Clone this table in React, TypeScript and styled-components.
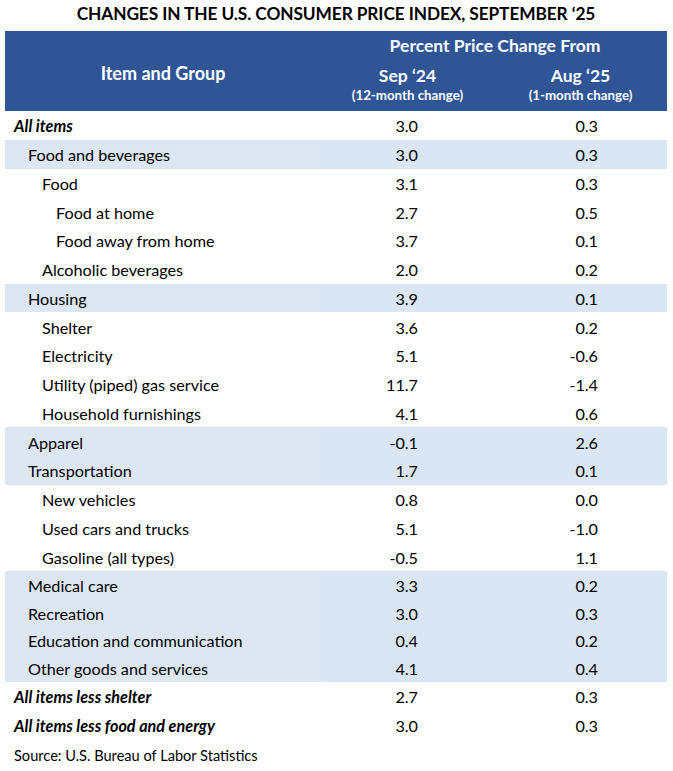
import React from "react";
import styled, { createGlobalStyle } from "styled-components";

type Item = {
  label: string;
  year: string;
  month: string;
  level: number;
  shaded?: boolean;
  total?: boolean;
  compact?: boolean;
};

const ITEMS: Item[] = [
  { label: "All items", year: "3.0", month: "0.3", level: 0, total: true },
  { label: "Food and beverages", year: "3.0", month: "0.3", level: 1, shaded: true },
  { label: "Food", year: "3.1", month: "0.3", level: 2 },
  { label: "Food at home", year: "2.7", month: "0.5", level: 3 },
  { label: "Food away from home", year: "3.7", month: "0.1", level: 3 },
  { label: "Alcoholic beverages", year: "2.0", month: "0.2", level: 2 },
  { label: "Housing", year: "3.9", month: "0.1", level: 1, shaded: true },
  { label: "Shelter", year: "3.6", month: "0.2", level: 2 },
  { label: "Electricity", year: "5.1", month: "-0.6", level: 2 },
  { label: "Utility (piped) gas service", year: "11.7", month: "-1.4", level: 2 },
  { label: "Household furnishings", year: "4.1", month: "0.6", level: 2 },
  { label: "Apparel", year: "-0.1", month: "2.6", level: 1, shaded: true },
  { label: "Transportation", year: "1.7", month: "0.1", level: 1, shaded: true },
  { label: "New vehicles", year: "0.8", month: "0.0", level: 2 },
  { label: "Used cars and trucks", year: "5.1", month: "-1.0", level: 2 },
  { label: "Gasoline (all types)", year: "-0.5", month: "1.1", level: 2 },
  { label: "Medical care", year: "3.3", month: "0.2", level: 1, shaded: true, compact: true },
  { label: "Recreation", year: "3.0", month: "0.3", level: 1, shaded: true, compact: true },
  { label: "Education and communication", year: "0.4", month: "0.2", level: 1, shaded: true, compact: true },
  { label: "Other goods and services", year: "4.1", month: "0.4", level: 1, shaded: true, compact: true },
  { label: "All items less shelter", year: "2.7", month: "0.3", level: 0, total: true },
  { label: "All items less food and energy", year: "3.0", month: "0.3", level: 0, total: true },
];

const GlobalStyle = createGlobalStyle`
  *, *::before, *::after {
    box-sizing: border-box;
  }
  body {
    margin: 0;
    background: #fff;
    font-family: Lato, "Open Sans", sans-serif;
    color: #000;
  }
`;

const Page = styled.div`
  width: 673px;
  padding: 0 6px 0 5px;
`;

const Title = styled.h1`
  margin: 0;
  height: 31px;
  display: flex;
  align-items: center;
  justify-content: center;
  font-size: 17.3px;
  font-weight: 700;
  letter-spacing: -0.1px;
  padding-bottom: 4px;
`;

const Table = styled.div`
  display: grid;
  grid-template-columns: 316px 173px 173px;
`;

const HeadCell = styled.div`
  background: #2f5597;
  color: #fff;
  font-weight: 700;
`;

const GroupHead = styled(HeadCell)`
  grid-row: span 2;
  display: flex;
  align-items: center;
  justify-content: center;
  font-size: 18px;
  padding-top: 3px;
`;

const SpanHead = styled(HeadCell)`
  grid-column: span 2;
  height: 28px;
  display: flex;
  align-items: center;
  justify-content: center;
  font-size: 17.5px;
  padding-left: 2px;
`;

const PeriodHead = styled(HeadCell)`
  height: 52px;
  display: flex;
  flex-direction: column;
  align-items: center;
  padding-top: 7px;
  font-size: 17.5px;
  line-height: 20px;

  small {
    margin-top: 2px;
    font-size: 13.3px;
    line-height: 15px;
  }
`;

const Row = styled.div<{ $shaded?: boolean; $compact?: boolean }>`
  display: contents;

  & > div {
    height: ${(p) => (p.$compact ? "27.75px" : "28.75px")};
    background: ${(p) => (p.$shaded ? "#dae6f4" : "transparent")};
  }

  & > div:first-child {
    background: ${(p) => (p.$shaded ? "#dde7f3" : "transparent")};
  }
`;

const Label = styled.div<{ $level: number; $total?: boolean }>`
  display: flex;
  align-items: center;
  padding-left: ${(p) => 9 + p.$level * 14}px;
  padding-top: 1px;
  font-size: 16.2px;
  font-weight: ${(p) => (p.$total ? 700 : 400)};
  font-style: ${(p) => (p.$total ? "italic" : "normal")};
  white-space: nowrap;
`;

const Value = styled.div<{ $pad: number }>`
  display: flex;
  align-items: center;
  justify-content: flex-end;
  padding-right: ${(p) => p.$pad}px;
  padding-top: 1px;
  font-size: 16.2px;
`;

const Source = styled.div`
  height: 30px;
  display: flex;
  align-items: center;
  padding-left: 9px;
  padding-top: 2px;
  font-size: 14.6px;
`;

const App = () => {
  return (
    <Page>
      <GlobalStyle />
      <Title>CHANGES IN THE U.S. CONSUMER PRICE INDEX, SEPTEMBER ‘25</Title>
      <Table>
        <GroupHead>Item and Group</GroupHead>
        <SpanHead>Percent Price Change From</SpanHead>
        <PeriodHead>
          Sep ‘24
          <small>(12-month change)</small>
        </PeriodHead>
        <PeriodHead>
          Aug ‘25
          <small>(1-month change)</small>
        </PeriodHead>
        {ITEMS.map((item) => (
          <Row key={item.label} $shaded={item.shaded} $compact={item.compact}>
            <Label $level={item.level} $total={item.total}>
              {item.label}
            </Label>
            <Value $pad={76}>{item.year}</Value>
            <Value $pad={69}>{item.month}</Value>
          </Row>
        ))}
      </Table>
      <Source>Source: U.S. Bureau of Labor Statistics</Source>
    </Page>
  );
};

export default App;
